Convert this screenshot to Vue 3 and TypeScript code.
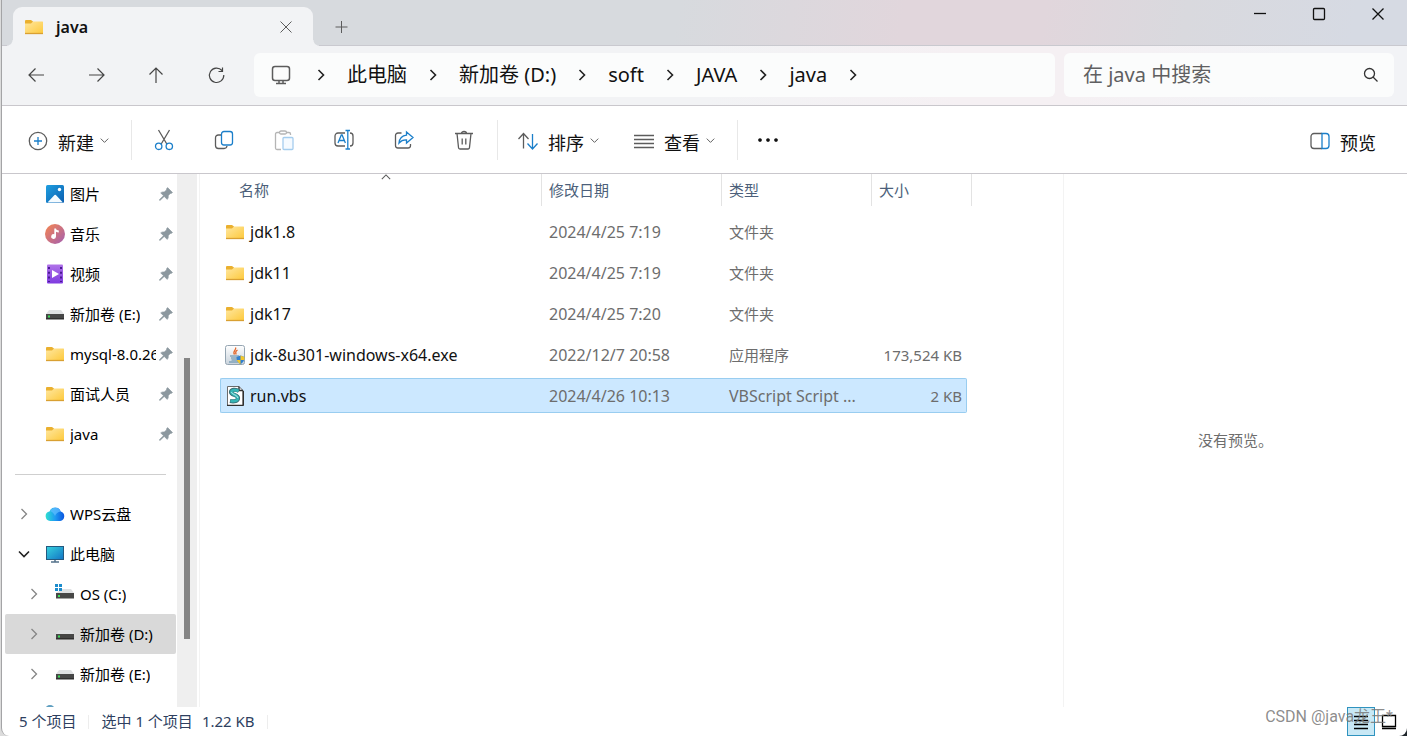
<script setup lang="ts">
import { ref } from 'vue'

interface Place {
  label: string
  icon: string
  pinned?: boolean
  level?: number
  arrow?: 'right' | 'down'
  active?: boolean
}

interface Entry {
  name: string
  icon: string
  date: string
  type: string
  size: string
}

const query = ref('')
const selected = ref('run.vbs')

const navButtons = [
  { icon: 'back', label: '后退' },
  { icon: 'forward', label: '前进' },
  { icon: 'up', label: '向上' },
  { icon: 'refresh', label: '刷新' },
]

const crumbs = ['此电脑', '新加卷 (D:)', 'soft', 'JAVA', 'java']

const actions = [
  { icon: 'cut', label: '剪切' },
  { icon: 'copy', label: '复制' },
  { icon: 'paste', label: '粘贴', disabled: true },
  { icon: 'rename', label: '重命名' },
  { icon: 'share', label: '共享' },
  { icon: 'trash', label: '删除' },
]

const pinnedPlaces: Place[] = [
  { label: '图片', icon: 'pictures', pinned: true },
  { label: '音乐', icon: 'music', pinned: true },
  { label: '视频', icon: 'video', pinned: true },
  { label: '新加卷 (E:)', icon: 'drive', pinned: true },
  { label: 'mysql-8.0.26', icon: 'folder', pinned: true },
  { label: '面试人员', icon: 'folder', pinned: true },
  { label: 'java', icon: 'folder', pinned: true },
]

const treePlaces: Place[] = [
  { label: 'WPS云盘', icon: 'cloud', arrow: 'right' },
  { label: '此电脑', icon: 'computer', arrow: 'down' },
  { label: 'OS (C:)', icon: 'osdrive', arrow: 'right', level: 1 },
  { label: '新加卷 (D:)', icon: 'drive', arrow: 'right', level: 1, active: true },
  { label: '新加卷 (E:)', icon: 'drive', arrow: 'right', level: 1 },
  { label: '', icon: 'network' },
]

const entries: Entry[] = [
  { name: 'jdk1.8', icon: 'folder', date: '2024/4/25 7:19', type: '文件夹', size: '' },
  { name: 'jdk11', icon: 'folder', date: '2024/4/25 7:19', type: '文件夹', size: '' },
  { name: 'jdk17', icon: 'folder', date: '2024/4/25 7:20', type: '文件夹', size: '' },
  { name: 'jdk-8u301-windows-x64.exe', icon: 'javaexe', date: '2022/12/7 20:58', type: '应用程序', size: '173,524 KB' },
  { name: 'run.vbs', icon: 'script', date: '2024/4/26 10:13', type: 'VBScript Script ...', size: '2 KB' },
]

const isLatin = (s: string) => /^[ -~]+$/.test(s)
</script>

<template>
  <div class="desktop">
    <svg class="sprite" aria-hidden="true">
      <defs>
        <linearGradient id="g-folder" x1="0" y1="0" x2="1" y2="1">
          <stop offset="0" stop-color="#ffe7a0" />
          <stop offset="1" stop-color="#fdc93c" />
        </linearGradient>
        <linearGradient id="g-pic" x1="0" y1="0" x2="1" y2="1">
          <stop offset="0" stop-color="#1f9fe0" />
          <stop offset="1" stop-color="#0b5eb0" />
        </linearGradient>
        <linearGradient id="g-music" x1="0" y1="0" x2="1" y2="1">
          <stop offset="0.1" stop-color="#ee8258" />
          <stop offset="0.9" stop-color="#ab62a8" />
        </linearGradient>
        <linearGradient id="g-video" x1="0" y1="0" x2="0" y2="1">
          <stop offset="0" stop-color="#b073e8" />
          <stop offset="1" stop-color="#7f3be0" />
        </linearGradient>
        <linearGradient id="g-screen" x1="0" y1="0" x2="1" y2="1">
          <stop offset="0" stop-color="#36d3de" />
          <stop offset="1" stop-color="#1273c4" />
        </linearGradient>
        <linearGradient id="g-cloud" x1="0" y1="0" x2="1" y2="0">
          <stop offset="0" stop-color="#2fe0cf" />
          <stop offset="0.5" stop-color="#1f9cf2" />
          <stop offset="1" stop-color="#0a55e0" />
        </linearGradient>
        <linearGradient id="g-exe" x1="0" y1="0" x2="0" y2="1">
          <stop offset="0" stop-color="#ffffff" />
          <stop offset="1" stop-color="#c9d3dc" />
        </linearGradient>
      </defs>

      <symbol id="i-folder" viewBox="0 0 20 20">
        <path d="M1 4a1 1 0 0 1 1-1h5l2 1.500v3H1z" fill="#eab02f" />
        <path d="M1 6.500h6l2-2h9.500a.5.500 0 0 1 .5.500v11.500H1z" fill="url(#g-folder)" />
        <path d="M1 16.500h18" stroke="#d9a032" fill="none" />
      </symbol>
      <symbol id="i-pictures" viewBox="0 0 20 20">
        <rect x="1" y="1" width="18" height="18" rx="1.500" fill="url(#g-pic)" />
        <path d="M2.500 18.500l7-7.500q.7-.7 1.400 0l7 7.500z" fill="#f4fbff" />
        <circle cx="14.500" cy="5.500" r="1.700" fill="#fff" />
      </symbol>
      <symbol id="i-music" viewBox="0 0 20 20">
        <circle cx="10" cy="10" r="10" fill="url(#g-music)" />
        <path d="M9.300 4.500h1.700c.3 1.500 1.300 1.900 2.800 2v2c-1.100 0-2-.3-2.800-.8v4.800a2.400 2.400 0 1 1-1.700-2.300z" fill="#fff" />
      </symbol>
      <symbol id="i-video" viewBox="0 0 20 20">
        <rect x="2" y="0.500" width="16" height="19" rx="1" fill="url(#g-video)" />
        <path d="M4 3v15M16 3v15" stroke="#4a1a92" stroke-width="2" stroke-dasharray="2 2.700" fill="none" />
        <path d="M7 6l7 4-7 4z" fill="#fff" stroke="none" />
      </symbol>
      <symbol id="i-drive" viewBox="0 0 20 20">
        <path d="M4 6h12l3 4H1z" fill="#dfe1e3" />
        <rect x="1" y="10" width="18" height="5" fill="#474747" />
        <rect x="1" y="14" width="18" height="1.500" fill="#303030" />
        <rect x="3" y="11.500" width="2" height="2" fill="#3fe05a" />
      </symbol>
      <symbol id="i-osdrive" viewBox="0 0 20 20">
        <path d="M7 5h9l3 4H1l3-2z" fill="#dfe1e3" />
        <rect x="1" y="9" width="18" height="5.500" fill="#474747" />
        <rect x="3" y="11" width="2" height="2" fill="#3fe05a" />
        <path d="M0 0h3v3H0zM4 0h3v3H4zM0 4h3v3H0zM4 4h3v3H4z" fill="#1c8ccc" />
      </symbol>
      <symbol id="i-cloud" viewBox="0 0 20 20">
        <path d="M5.200 17a4.800 4.800 0 0 1-.7-9.500 6 6 0 0 1 11.300 0A4.900 4.900 0 0 1 15.200 17z" fill="url(#g-cloud)" />
        <path d="M5 7a6 6 0 0 1 10.800.5c-3 .2-4.800 2-5.800 4.500-1-2.500-3-4.200-5-5z" fill="#5fbcff" opacity=".75" />
      </symbol>
      <symbol id="i-computer" viewBox="0 0 20 20">
        <rect x="1.500" y="2.500" width="17" height="13" fill="url(#g-screen)" stroke="#24597f" />
        <path d="M10 16v2M6 18h8" stroke="#53718a" stroke-width="1.500" fill="none" />
      </symbol>
      <symbol id="i-network" viewBox="0 0 20 20">
        <circle cx="5" cy="6" r="5" fill="#5f9fc0" />
      </symbol>
      <symbol id="i-javaexe" viewBox="0 0 20 20">
        <rect x="0.500" y="0.500" width="19" height="19" rx="2" fill="url(#g-exe)" stroke="#95a5b2" />
        <path d="M10.500 2.500c1.500 2-3.500 3.500-1 7M12.500 5c-2 1.200-2.500 2.200-1.300 4.500" stroke="#e3682c" stroke-width="1.300" fill="none" />
        <path d="M5 11h9M6 13h7M6.500 15h6M4 17h9" stroke="#5686a6" stroke-width="1.200" fill="none" />
        <path d="M15.500 10.500l4 1.500c0 3.500-1 5.500-4 7.200-3-1.700-4-3.700-4-7.200z" fill="#2f7fd0" stroke="none" />
        <path d="M15.500 10.500l4 1.500v3h-4zM15.500 15v4.200c-2-1.200-3-2.500-3.700-4.200z" fill="#f4c72c" stroke="none" />
      </symbol>
      <symbol id="i-script" viewBox="0 0 20 20">
        <path d="M2.500.5H14l4 4v15H2.500z" fill="#fff" stroke="#6b6b6b" stroke-width="1" />
        <path d="M14 .5v4h4M18.300 5v14.500M2 19.500h16.500" stroke="#303030" stroke-width="1.400" fill="none" />
        <path d="M14 5C10.500 3 6 3.500 6 6.200S13 9 13 12s-3.500 3.800-8 3" stroke="#3a6f78" stroke-width="4.200" fill="none" />
        <path d="M13.500 5C10.500 3.500 6.500 3.800 6.500 6.200S12.800 9 12.800 12s-3.300 3.500-7.300 2.800" stroke="#35b5b5" stroke-width="2.800" fill="none" />
        <path d="M6.500 6c0 2.500 6.300 3 6.300 6" stroke="#b5efee" stroke-width="1" fill="none" />
      </symbol>
      <symbol id="i-pin" viewBox="0 0 14 14">
        <path d="M8.600.6l4.900 4.900-1.300.9-1 .1-2 2.300c.3 1.400 0 2.600-1 3.600L5.200 9.400 1.200 13.300H.5v-.7L4.500 8.700 1.700 5.900c1-.9 2.200-1.200 3.500-.9l2.300-2.100.1-1.200z" fill="#8c989f" stroke="#8c989f" stroke-width=".6" />
      </symbol>

      <symbol id="i-back" viewBox="0 0 20 20"><path d="M3 10h15M9.500 3.500L3 10l6.500 6.500" /></symbol>
      <symbol id="i-forward" viewBox="0 0 20 20"><path d="M3 10h15M11.500 3.500L18 10l-6.500 6.500" /></symbol>
      <symbol id="i-up" viewBox="0 0 20 20"><path d="M10 3v15M3.500 9.500L10 3l6.500 6.500" /></symbol>
      <symbol id="i-refresh" viewBox="0 0 20 20">
        <path d="M16 5.500A7.200 7.200 0 1 0 17.800 10M16.500 2.500v4h-4" />
      </symbol>
      <symbol id="i-monitor" viewBox="0 0 20 20">
        <rect x="1.500" y="1.500" width="17" height="14" rx="2.500" />
        <path d="M8 15.500v2.500M12 15.500v2.500M5 18.500h10" />
      </symbol>
      <symbol id="i-search" viewBox="0 0 20 20"><circle cx="8.500" cy="8.500" r="5" /><path d="M12 12l4.500 4.500" /></symbol>
      <symbol id="i-new" viewBox="0 0 20 20">
        <circle cx="10" cy="10" r="8.700" />
        <path d="M10 6v8M6 10h8" class="blue" />
      </symbol>
      <symbol id="i-cut" viewBox="0 0 20 22">
        <path d="M4.500 1l8.300 14M15.500 1L7.200 15" />
        <circle cx="4.700" cy="17.300" r="3.200" class="blue" />
        <circle cx="15.300" cy="17.300" r="3.200" class="blue" />
      </symbol>
      <symbol id="i-copy" viewBox="0 0 20 20">
        <path d="M7 5H4.500A2.800 2.800 0 0 0 1.500 8v7.500a3 3 0 0 0 3 3h5.500a3 3 0 0 0 3-2.500" />
        <rect x="7.500" y="1.500" width="11" height="13.500" rx="2.500" class="blue" />
      </symbol>
      <symbol id="i-paste" viewBox="0 0 20 20">
        <path d="M6 2.500H3A1.500 1.500 0 0 0 1.500 4v14A1.500 1.500 0 0 0 3 19.500h4M12 2.500h3A1.500 1.500 0 0 1 16.500 4v1" />
        <rect x="5.500" y="1" width="7" height="3" rx="1.500" />
        <rect x="9" y="7.500" width="10" height="12" rx="1" class="blue" />
      </symbol>
      <symbol id="i-rename" viewBox="1 0 20 22">
        <path d="M12 4H5a3 3 0 0 0-3 3v7a3 3 0 0 0 3 3h7M17 4a3 3 0 0 1 3 3v7a3 3 0 0 1-3 3" />
        <path d="M5 14l3.300-8h.8l3.300 8M6.300 11.500h4.800M12.500 1.500h4.500M12.500 20h4.500M14.800 1.500V20" class="blue" />
      </symbol>
      <symbol id="i-share" viewBox="0 0 20 20">
        <path d="M7.500 3H4a2.500 2.500 0 0 0-2.500 2.500v10A2.500 2.500 0 0 0 4 18h10a2.500 2.500 0 0 0 2.500-2.500V14" />
        <path d="M12.500 2l6.500 5.500-6.500 5.500v-3.200c-3.500-.2-5.500.8-7.500 3.200.5-4.500 3-7.300 7.500-7.800z" class="blue" />
      </symbol>
      <symbol id="i-trash" viewBox="0 0 20 20">
        <path d="M1 3.500h18M3 3.500l1.500 14a1.500 1.500 0 0 0 1.500 1.500h8a1.500 1.500 0 0 0 1.500-1.500L17 3.500M7.500 3.500a2.500 2 0 0 1 5 0M8.200 8.500v6M11.800 8.500v6" />
      </symbol>
      <symbol id="i-sort" viewBox="1 0 20 20">
        <path d="M6.500 17.500V3M1.500 8l5-5.500 5 5.500" />
        <path d="M15.500 3v14.500M10.500 12.500l5 5.500 5-5.500" class="blue" />
      </symbol>
      <symbol id="i-view" viewBox="0 0 20 20"><path d="M0 4.500h20M0 8.500h20M0 12.500h20M0 16.500h20" /></symbol>
      <symbol id="i-more" viewBox="0 0 20 20">
        <path d="M2 8.200a1.800 1.800 0 1 0 .01 0zM10 8.200a1.800 1.800 0 1 0 .01 0zM18 8.200a1.800 1.800 0 1 0 .01 0z" fill="#111" stroke="none" />
      </symbol>
      <symbol id="i-preview" viewBox="0 0 20 20">
        <path d="M12 2.500H4A3 3 0 0 0 1 5.500v9a3 3 0 0 0 3 3h8" />
        <path d="M12 2.500h4a3 3 0 0 1 3 3v9a3 3 0 0 1-3 3h-4z" class="blue" />
      </symbol>
      <symbol id="i-right" viewBox="0 0 12 12"><path d="M3.500 1l5 5-5 5" /></symbol>
      <symbol id="i-down" viewBox="0 0 12 12"><path d="M1 3.500l5 5 5-5" /></symbol>
      <symbol id="i-close" viewBox="0 0 14 14"><path d="M1.500 1.500l11 11M12.500 1.500l-11 11" /></symbol>
      <symbol id="i-plus" viewBox="0 0 14 14"><path d="M6.500 1v12M.5 7h12" /></symbol>
      <symbol id="i-min" viewBox="0 0 14 14"><path d="M1 6.500h12" /></symbol>
      <symbol id="i-max" viewBox="0 0 14 14"><rect x="1.500" y="1.500" width="11" height="11" rx="1" /></symbol>
      <symbol id="i-details" viewBox="0 0 16 16"><path d="M1 2.500h14M1 6.500h14M1 10.500h14M1 14.500h14" /></symbol>
      <symbol id="i-tiles" viewBox="0 0 16 16"><path d="M1.500 1.500h13v11h-13zM1 14.500h14" /></symbol>
    </svg>

    <div class="window">
      <header class="chrome">
        <div class="titlebar">
          <div class="tab">
            <svg class="ic20"><use href="#i-folder" /></svg>
            <span class="tab-title">java</span>
            <button class="tab-close" aria-label="关闭标签页"><svg class="ic14"><use href="#i-close" /></svg></button>
          </div>
          <button class="tab-add" aria-label="新建标签页"><svg class="ic14"><use href="#i-plus" /></svg></button>
          <div class="caption">
            <button aria-label="最小化"><svg class="ic14"><use href="#i-min" /></svg></button>
            <button aria-label="最大化"><svg class="ic14"><use href="#i-max" /></svg></button>
            <button aria-label="关闭"><svg class="ic14"><use href="#i-close" /></svg></button>
          </div>
        </div>

        <div class="navbar">
          <button v-for="b in navButtons" :key="b.icon" class="nav-btn" :aria-label="b.label">
            <svg class="ic20"><use :href="'#i-' + b.icon" /></svg>
          </button>
          <nav class="address" aria-label="地址">
            <svg class="ic20 monitor"><use href="#i-monitor" /></svg>
            <svg class="ic12"><use href="#i-right" /></svg>
            <template v-for="c in crumbs" :key="c">
              <a href="#" @click.prevent>{{ c }}</a>
              <svg class="ic12"><use href="#i-right" /></svg>
            </template>
          </nav>
          <label class="search">
            <input v-model="query" type="text" placeholder="在 java 中搜索" aria-label="在 java 中搜索" />
            <svg class="ic20"><use href="#i-search" /></svg>
          </label>
        </div>
      </header>

      <div class="toolbar" role="toolbar">
        <button class="cmd new">
          <svg class="ic20"><use href="#i-new" /></svg><span>新建</span>
          <svg class="caret"><use href="#i-down" /></svg>
        </button>
        <i class="sep"></i>
        <div class="actions">
          <button v-for="a in actions" :key="a.icon" class="icon-cmd" :disabled="a.disabled" :aria-label="a.label">
            <svg class="ic22"><use :href="'#i-' + a.icon" /></svg>
          </button>
        </div>
        <i class="sep"></i>
        <button class="cmd sort">
          <svg class="ic20"><use href="#i-sort" /></svg><span>排序</span>
          <svg class="caret"><use href="#i-down" /></svg>
        </button>
        <button class="cmd view">
          <svg class="ic20"><use href="#i-view" /></svg><span>查看</span>
          <svg class="caret"><use href="#i-down" /></svg>
        </button>
        <i class="sep"></i>
        <button class="icon-cmd" aria-label="更多"><svg class="ic20"><use href="#i-more" /></svg></button>
        <button class="cmd preview-cmd">
          <svg class="ic20"><use href="#i-preview" /></svg><span>预览</span>
        </button>
      </div>

      <div class="body">
        <aside class="sidebar">
          <nav class="places" aria-label="导航窗格">
            <a v-for="p in pinnedPlaces" :key="p.label" href="#" class="place" @click.prevent>
              <span class="slot"></span>
              <svg class="ic20"><use :href="'#i-' + p.icon" /></svg>
              <span class="label">{{ p.label }}</span>
              <svg class="ic14 pin"><use href="#i-pin" /></svg>
            </a>
            <div class="divider"><hr /></div>
            <a
              v-for="p in treePlaces"
              :key="p.label"
              href="#"
              class="place"
              :class="{ nested: p.level, active: p.active }"
              @click.prevent
            >
              <span class="slot" :class="p.arrow">
                <svg v-if="p.arrow" class="ic12"><use :href="'#i-' + p.arrow" /></svg>
              </span>
              <svg class="ic20"><use :href="'#i-' + p.icon" /></svg>
              <span class="label">{{ p.label }}</span>
            </a>
          </nav>
          <div class="scrollbar"><div class="thumb"></div></div>
        </aside>

        <main class="files">
          <table>
            <colgroup>
              <col class="c-name" /><col class="c-date" /><col class="c-type" /><col class="c-size" />
            </colgroup>
            <thead>
              <tr>
                <th aria-sort="ascending">
                  <button class="h-name">名称<svg class="sort-mark"><use href="#i-down" /></svg></button>
                </th>
                <th><button>修改日期</button></th>
                <th><button>类型</button></th>
                <th><button class="h-size">大小</button></th>
              </tr>
            </thead>
            <tbody>
              <tr v-for="e in entries" :key="e.name" :class="{ selected: e.name === selected }" @click="selected = e.name">
                <td class="latin">
                  <div class="name"><svg class="ic20"><use :href="'#i-' + e.icon" /></svg><span>{{ e.name }}</span></div>
                </td>
                <td class="latin">{{ e.date }}</td>
                <td :class="{ latin: isLatin(e.type) }">{{ e.type }}</td>
                <td class="size">{{ e.size }}</td>
              </tr>
            </tbody>
          </table>
        </main>

        <section class="preview">没有预览。</section>
      </div>

      <footer class="status">
        <span>5 个项目</span>
        <i></i>
        <span>选中 1 个项目</span>
        <span class="bytes">1.22 KB</span>
        <i></i>
        <div class="modes">
          <button class="on" aria-label="详细信息"><svg class="ic16"><use href="#i-details" /></svg></button>
          <button aria-label="大缩略图"><svg class="ic16"><use href="#i-tiles" /></svg></button>
          <span class="mark">CSDN @java龙王*</span>
        </div>
      </footer>
    </div>
  </div>
</template>

<style>
body {
  margin: 0;
  background: #dcdcdc;
}
</style>

<style scoped>
.desktop {
  height: 100vh;
  box-sizing: border-box;
  padding-left: 1px;
  background: linear-gradient(90deg, #dcdcdc 50%, #20262c 50%);
  font-family: 'Noto Sans', 'Noto Sans CJK SC', sans-serif;
  font-size: 15px;
  line-height: 20px;
  color: #111;
}
.sprite {
  position: absolute;
  width: 0;
  height: 0;
}
.window {
  display: flex;
  flex-direction: column;
  height: 100%;
  box-sizing: border-box;
  border-left: 1px solid #a4a4a6;
  border-radius: 0 0 8px 8px;
  background: #fff;
  overflow: hidden;
}
button {
  display: flex;
  align-items: center;
  margin: 0;
  padding: 0;
  border: 0;
  background: none;
  font: inherit;
  color: inherit;
}
a {
  color: inherit;
  text-decoration: none;
}
svg {
  display: block;
  flex: none;
  fill: none;
  stroke: #5c5c5c;
  stroke-width: 1.3;
}
symbol#i-folder,
symbol#i-pictures,
symbol#i-music,
symbol#i-video,
symbol#i-drive,
symbol#i-osdrive,
symbol#i-cloud,
symbol#i-network {
  stroke: none;
}
symbol#i-computer rect,
symbol#i-javaexe rect {
  stroke-width: 1;
}
symbol#i-paste {
  stroke: #b5b5b5;
}
symbol#i-paste .blue {
  stroke: #a5cdee;
  fill: #f5faff;
}
.blue {
  stroke: #1b7fca;
}
.ic12 { width: 12px; height: 12px; }
.ic14 { width: 14px; height: 14px; }
.ic16 { width: 16px; height: 16px; }
.ic20 { width: 20px; height: 20px; }
.ic22 { width: 20px; height: 22px; }

.chrome {
  flex: none;
  border-bottom: 1px solid #c9c7cc;
  background: linear-gradient(90deg, #f2f3f5 50%, #f5f0f3 68%, #f5f0f3 76%, #f2f3f6 92%);
}
.titlebar {
  display: flex;
  height: 46px;
  box-sizing: border-box;
  padding-left: 11px;
  border-bottom: 1px solid #c9c9cf;
  background: linear-gradient(100deg, #d7dade 48%, #e1d6dc 64%, #e1d6dc 74%, #d9d9de 84%, #d6dae3 96%);
}
.tab {
  position: relative;
  display: flex;
  align-items: center;
  width: 300px;
  height: 39px;
  box-sizing: border-box;
  margin-top: 7px;
  padding: 0 20px 0 11px;
  border-radius: 9px 9px 0 0;
  background: #f2f3f5;
}
.tab::before,
.tab::after {
  content: '';
  position: absolute;
  bottom: 0;
  width: 6px;
  height: 6px;
}
.tab::before {
  left: -6px;
  background: radial-gradient(circle at 0 0, transparent 5px, #f2f3f5 6px);
}
.tab::after {
  right: -6px;
  background: radial-gradient(circle at 100% 0, transparent 5px, #f2f3f5 6px);
}
.tab-title {
  margin-left: 12px;
  font-size: 16px;
  font-weight: 600;
}
.tab-close {
  margin-left: auto;
}
.tab-add {
  margin: 8px 0 0 22px;
}
.tab-close svg,
.tab-add svg {
  stroke-width: 1;
}
.caption {
  display: flex;
  align-items: flex-start;
  margin-left: auto;
}
.caption button {
  justify-content: center;
  width: 59px;
  height: 28px;
}
.caption svg {
  stroke: #111;
}
.navbar {
  display: flex;
  align-items: center;
  height: 59px;
  box-sizing: border-box;
  padding: 0 13px 2px 4px;
}
.nav-btn {
  justify-content: center;
  width: 60px;
  height: 44px;
}
.nav-btn svg {
  stroke: #454545;
  stroke-width: 1.2;
}
.address {
  display: flex;
  flex: 1;
  align-items: center;
  gap: 20px;
  height: 44px;
  box-sizing: border-box;
  margin-left: 8px;
  padding-left: 17px;
  border-radius: 6px;
  background: #fbfcfc;
  font-size: 20px;
  line-height: 28px;
  white-space: nowrap;
}
.address .ic12 {
  stroke: #222;
  stroke-width: 1.6;
}
.address .monitor {
  margin-right: 4px;
  stroke-width: 1.5;
}
.search {
  display: flex;
  align-items: center;
  width: 330px;
  height: 44px;
  box-sizing: border-box;
  margin-left: 9px;
  padding: 0 13px 0 19px;
  border-radius: 6px;
  background: #fbfcfc;
}
.search input {
  flex: 1;
  min-width: 0;
  padding: 0;
  border: 0;
  outline: 0;
  background: none;
  font: inherit;
  font-size: 20px;
  line-height: 28px;
}
.search input::placeholder {
  color: #5f5f61;
  opacity: 1;
}
.search svg {
  stroke: #333;
}

.toolbar {
  display: flex;
  flex: none;
  align-items: center;
  height: 68px;
  box-sizing: border-box;
  padding: 0 31px 0 26px;
  border-bottom: 1px solid #c9c7cc;
  background: #fff;
}
.cmd {
  height: 40px;
  padding-top: 2px;
  font-size: 18px;
  line-height: 24px;
}
.cmd span {
  margin: 4px 6px 0 10px;
}
.caret {
  width: 9px;
  height: 9px;
}
.new {
  margin-right: 22px;
}
.sep {
  flex: none;
  width: 1px;
  height: 40px;
  background: #e8e8e8;
}
.actions {
  display: flex;
  margin: 0 3px 0 2px;
}
.icon-cmd {
  justify-content: center;
  width: 60px;
  height: 40px;
}
.sort {
  margin-left: 20px;
}
.view {
  margin: 0 22px 0 35px;
}
.preview-cmd {
  margin-left: auto;
}
.preview-cmd span {
  margin-right: 0;
}

.body {
  display: flex;
  flex: 1;
  min-height: 0;
}
.sidebar {
  display: flex;
  flex: none;
  width: 198px;
  box-sizing: border-box;
  padding-right: 2px;
  border-right: 1px solid #f3f3f3;
}
.places {
  flex: 1;
  min-width: 0;
  overflow: hidden;
}
.place {
  display: flex;
  align-items: center;
  height: 40px;
  box-sizing: border-box;
  margin: 0 1px 0 3px;
  padding: 0 3px 0 9px;
  border-radius: 2px;
  color: #000;
}
.nested {
  padding-left: 19px;
}
.active {
  background: #d9d9d9;
}
.slot {
  display: flex;
  flex: none;
  justify-content: center;
  width: 20px;
  margin-right: 11px;
}
.slot svg {
  stroke: #858585;
}
.slot.down svg {
  stroke: #222;
  stroke-width: 1.6;
}
.label {
  margin: 0 3px 0 5px;
  overflow: hidden;
  white-space: nowrap;
}
.nested .label {
  margin-right: 0;
}
.pin {
  margin-left: auto;
}
.divider {
  display: flex;
  align-items: center;
  height: 40px;
  padding: 0 11px 0 13px;
}
.divider hr {
  flex: 1;
  margin: 0;
  border: 0;
  border-top: 1px solid #cfcfcf;
}
.scrollbar {
  flex: none;
  width: 20px;
  background: #efefef;
}
.thumb {
  width: 6px;
  height: 281px;
  margin: 184px auto 0;
  background: #858585;
}

.files {
  flex: 1;
  min-width: 0;
  overflow: hidden;
  padding-left: 20px;
}
table {
  width: 747px;
  margin-top: -6px;
  table-layout: fixed;
  border-spacing: 0 6px;
}
.c-name { width: 322px; }
.c-date { width: 180px; }
.c-type { width: 150px; }
.c-size { width: 95px; }
th {
  height: 34px;
  padding: 0;
  vertical-align: top;
  font-weight: 400;
  color: #4c5f7a;
}
th button {
  position: relative;
  width: 100%;
  height: 32px;
  box-sizing: border-box;
  padding-left: 7px;
  border-right: 1px solid #e3e3e3;
}
th .h-name {
  padding-left: 19px;
}
th .h-size {
  width: 100px;
}
.sort-mark {
  position: absolute;
  top: -2px;
  left: 50%;
  width: 10px;
  height: 10px;
  transform: rotate(180deg);
}
td {
  height: 35px;
  box-sizing: border-box;
  padding: 0 0 0 7px;
  border: 1px solid transparent;
  border-width: 1px 0;
  color: #6d6d6d;
  white-space: nowrap;
}
.latin {
  font-size: 16px;
}
td:first-child {
  padding-left: 5px;
  color: #111;
}
.size {
  padding: 0 5px 0 0;
  text-align: right;
}
.name {
  display: flex;
  align-items: center;
  gap: 5px;
}
.selected td {
  border-color: #99cdf0;
  background: #cce8ff;
}
.selected td:first-child {
  padding-left: 4px;
  border-left-width: 1px;
  border-radius: 2px 0 0 2px;
}
.selected .size {
  padding-right: 4px;
  border-right-width: 1px;
  border-radius: 0 2px 2px 0;
}
.preview {
  display: flex;
  flex: none;
  align-items: center;
  justify-content: center;
  width: 344px;
  box-sizing: border-box;
  padding-bottom: 2px;
  border-left: 1px solid #f3f3f3;
  color: #6d6d6d;
}

.status {
  display: flex;
  flex: none;
  align-items: center;
  height: 29px;
  padding: 0 4px 0 17px;
  color: #2e3f5f;
}
.status > span {
  margin-bottom: 2px;
}
.status i {
  width: 1px;
  height: 14px;
  margin: 0 12px;
  background: #ededed;
}
.status .bytes {
  margin-left: 9px;
}
.modes {
  position: relative;
  display: flex;
  height: 29px;
  margin-left: auto;
}
.modes button {
  justify-content: center;
  width: 28px;
  height: 29px;
  box-sizing: border-box;
}
.modes svg {
  stroke: #000;
}
.modes .on {
  border: 1px solid #2f93bf;
  background: #c8e8f5;
}
.mark {
  position: absolute;
  right: 10px;
  bottom: 9px;
  font-family: Roboto, 'Noto Sans CJK SC', sans-serif;
  font-size: 16px;
  color: rgba(120, 120, 120, 0.85);
  white-space: nowrap;
}
</style>
